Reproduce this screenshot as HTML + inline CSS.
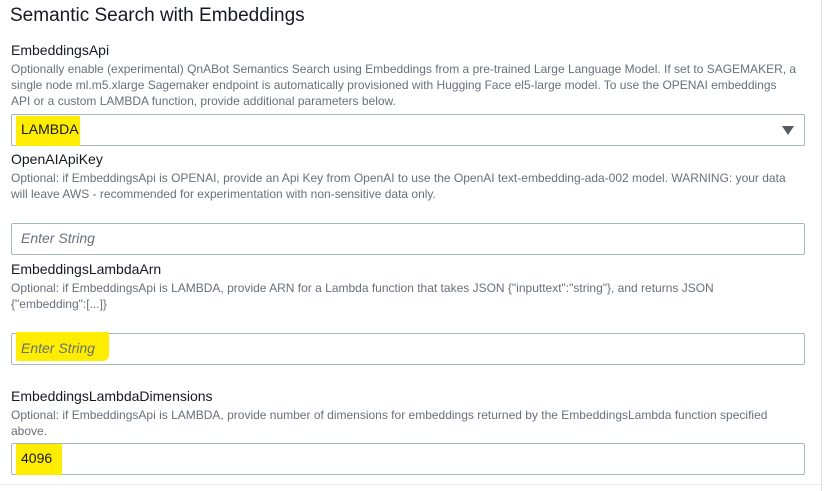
<!DOCTYPE html>
<html><head><style>
body{margin:0;width:832px;height:491px;background:#fff;font-family:"Liberation Sans",sans-serif;position:relative;overflow:hidden}
.a{position:absolute;white-space:nowrap}
.t{left:10px;top:5px;font-size:19px;color:#16191f}
.l{left:11px;font-size:14px;color:#16191f}
.d{left:11px;font-size:12px;line-height:16px;color:#687078}
.i{position:absolute;left:11px;width:792px;height:30px;border:1px solid #aab7b8;border-radius:2px}
.p{position:absolute;left:9px;top:6px;font-size:14px}
.hl{position:absolute;background:#ffed00}
</style></head><body>
<div style="position:absolute;left:821px;top:0;width:1px;height:491px;background:#e0e0e0"></div>
<div style="position:absolute;left:0;top:484px;width:821px;height:1px;background:#eaeded"></div>
<div class="a t">Semantic Search with Embeddings</div>

<div class="a l" style="top:42px">EmbeddingsApi</div>
<div class="a d" style="top:61px">Optionally enable (experimental) QnABot Semantics Search using Embeddings from a pre-trained Large Language Model. If set to SAGEMAKER, a<br>single node ml.m5.xlarge Sagemaker endpoint is automatically provisioned with Hugging Face el5-large model. To use the OPENAI embeddings<br>API or a custom LAMBDA function, provide additional parameters below.</div>
<div class="i" style="top:114px"><div class="hl" style="left:4px;top:1px;width:64px;height:30px"></div><div class="p" style="color:#16191f">LAMBDA</div>
<svg style="position:absolute;right:10px;top:11px" width="12" height="9"><path d="M0 0H12L6 9Z" fill="#545b64"/></svg></div>

<div class="a l" style="top:151px">OpenAIApiKey</div>
<div class="a d" style="top:170px">Optional: if EmbeddingsApi is OPENAI, provide an Api Key from OpenAI to use the OpenAI text-embedding-ada-002 model. WARNING: your data<br>will leave AWS - recommended for experimentation with non-sensitive data only.</div>
<div class="i" style="top:223px"><div class="p" style="color:#687078;font-style:italic">Enter String</div></div>

<div class="a l" style="top:261px">EmbeddingsLambdaArn</div>
<div class="a d" style="top:280px">Optional: if EmbeddingsApi is LAMBDA, provide ARN for a Lambda function that takes JSON {"inputtext":"string"}, and returns JSON<br>{"embedding":[...]}</div>
<div class="i" style="top:333px"><div class="hl" style="left:4px;top:-2px;width:93px;height:29px;border-radius:0 0 6px 2px"></div><div class="p" style="color:#687078;font-style:italic">Enter String</div></div>

<div class="a l" style="top:388px">EmbeddingsLambdaDimensions</div>
<div class="a d" style="top:407px">Optional: if EmbeddingsApi is LAMBDA, provide number of dimensions for embeddings returned by the EmbeddingsLambda function specified<br>above.</div>
<div class="i" style="top:443px"><div class="hl" style="left:4px;top:0;width:46px;height:31px"></div><div class="p" style="color:#16191f">4096</div></div>
</body></html>
